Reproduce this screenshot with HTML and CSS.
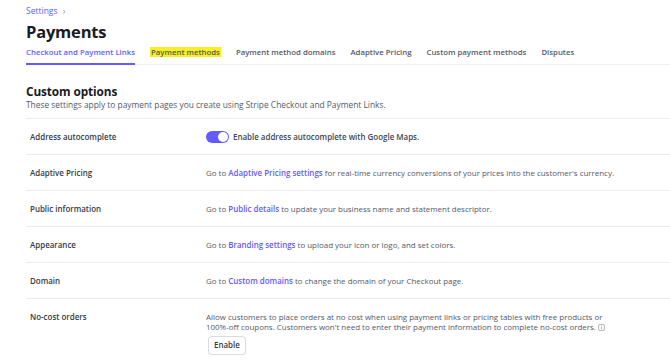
FILE: index.html
```html
<!DOCTYPE html>
<html lang="en">
<head>
    <meta charset="UTF-8">
    <meta name="viewport" content="width=device-width, initial-scale=1.0">
    <title>Payments settings</title>
    <link rel="stylesheet" href="styles.css">
</head>
<body>
    <div class="page">
        <div class="crumb">Settings <span class="chev">&rsaquo;</span></div>
        <h1>Payments</h1>

        <nav class="tabs">
            <a class="tab active">Checkout and Payment Links</a>
            <a class="tab"><span class="hl">Payment methods</span></a>
            <a class="tab">Payment method domains</a>
            <a class="tab">Adaptive Pricing</a>
            <a class="tab">Custom payment methods</a>
            <a class="tab">Disputes</a>
        </nav>

        <section class="options">
            <h2>Custom options</h2>
            <p class="sub">These settings apply to payment pages you create using Stripe Checkout and Payment Links.</p>

            <div class="row">
                <div class="label">Address autocomplete</div>
                <div class="value toggle-line">
                    <span class="toggle"><span class="knob"></span></span>
                    <span class="strong">Enable address autocomplete with Google Maps.</span>
                </div>
            </div>

            <div class="row">
                <div class="label">Adaptive Pricing</div>
                <div class="value">Go to <a>Adaptive Pricing settings</a> for real-time currency conversions of your prices into the customer's currency.</div>
            </div>

            <div class="row">
                <div class="label">Public information</div>
                <div class="value">Go to <a>Public details</a> to update your business name and statement descriptor.</div>
            </div>

            <div class="row">
                <div class="label">Appearance</div>
                <div class="value">Go to <a>Branding settings</a> to upload your icon or logo, and set colors.</div>
            </div>

            <div class="row">
                <div class="label">Domain</div>
                <div class="value">Go to <a>Custom domains</a> to change the domain of your Checkout page.</div>
            </div>

            <div class="row top">
                <div class="label">No-cost orders</div>
                <div class="value">
                    <p class="desc">Allow customers to place orders at no cost when using payment links or pricing tables with free products or<br>100%-off coupons. Customers won't need to enter their payment information to complete no-cost orders.
                        <svg class="info" width="7" height="7" viewBox="0 0 8 8"><rect x="0.5" y="0.5" width="7" height="7" rx="2" fill="none" stroke="#8c8f9a" stroke-width="0.8"/><rect x="3.6" y="3.4" width="0.8" height="2.6" fill="#8c8f9a"/><rect x="3.6" y="1.9" width="0.8" height="0.8" fill="#8c8f9a"/></svg>
                    </p>
                    <button class="btn">Enable</button>
                </div>
            </div>
        </section>
    </div>
</body>
</html>
```

FILE: styles.css
```css
body {
    margin: 0;
    font-family: "Open Sans", "Noto Sans", Arial, sans-serif;
    color: #414552;
    background: #fff;
}

.page {
    padding: 4px 0 0 26px;
}

.crumb {
    font-size: 8.5px;
    color: #635bff;
    height: 13px;
    line-height: 13px;
}

.chev {
    color: #8c8f9a;
    margin-left: 3px;
}

h1 {
    margin: 2px 0 0;
    font-size: 16.5px;
    line-height: 26px;
    font-weight: 700;
    letter-spacing: -0.2px;
    color: #1a1b25;
}

.tabs {
    display: flex;
    gap: 15px;
    margin-top: 0;
    border-bottom: 1px solid #f0f1f3;
}

.tab {
    font-size: 7.8px;
    font-weight: 600;
    color: #545969;
    padding: 2px 0 6px;
    border-bottom: 2px solid transparent;
    margin-bottom: -1px;
}

.tab.active {
    color: #635bff;
    border-bottom-color: #635bff;
}

.hl {
    background: #f7f01f;
    padding: 0 1px;
}

.options {
    margin-top: 19px;
}

h2 {
    margin: 0;
    font-size: 11.8px;
    line-height: 15px;
    font-weight: 700;
    letter-spacing: -0.1px;
    color: #1a1b25;
}

.sub {
    margin: 0 0 8px;
    font-size: 8.4px;
    line-height: 11px;
    color: #545969;
}

.row {
    display: grid;
    grid-template-columns: 180px 1fr;
    align-items: center;
    height: 35px;
    border-top: 1px solid #ebeef1;
    font-size: 7.95px;
}

.row.top {
    align-items: start;
    height: auto;
    padding-top: 13px;
}

.label {
    padding-left: 4px;
    font-weight: 600;
    color: #353a44;
}

.value {
    color: #545969;
}

.value a {
    color: #635bff;
    font-weight: 600;
}

.toggle-line {
    display: flex;
    align-items: center;
    gap: 4px;
}

.strong {
    font-weight: 600;
    color: #414552;
}

.toggle {
    width: 23px;
    height: 12px;
    border-radius: 6px;
    background: #635bff;
    display: flex;
    align-items: center;
    justify-content: flex-end;
    padding: 0 1px;
    box-sizing: border-box;
}

.knob {
    width: 10px;
    height: 10px;
    border-radius: 50%;
    background: #fff;
}

.desc {
    margin: 0;
    line-height: 10px;
}

.info {
    vertical-align: -1px;
}

.btn {
    margin-top: 4px;
    margin-left: 2px;
    font-family: inherit;
    font-size: 7.95px;
    font-weight: 600;
    color: #353a44;
    background: #fff;
    border: 1px solid #d8dbe0;
    border-radius: 4px;
    padding: 3px 5px 4px;
    box-shadow: 0 1px 1px rgba(0, 0, 0, 0.06);
}
```
